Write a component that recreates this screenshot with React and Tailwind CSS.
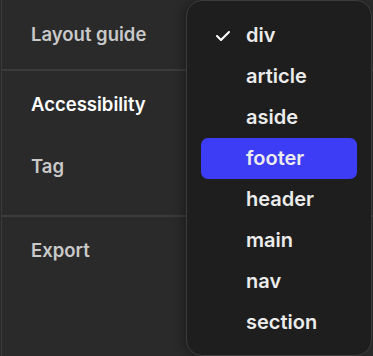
import React from "react";
import { FaCheck } from "react-icons/fa6";

const tags = ["div", "article", "aside", "footer", "header", "main", "nav", "section"];

const SideItem = ({ label, active }) => (
  <div
    className={`h-[24px] flex items-center pl-[29px] text-[18.5px] font-semibold ${
      active ? "text-white" : "text-[#c9c9c9]"
    }`}
  >
    {label}
  </div>
);

const App = () => {
  const selected = "div";
  const highlighted = "footer";

  return (
    <div
      className="relative w-[373px] h-[356px] overflow-hidden bg-[#2a2a2a]"
      style={{ fontFamily: "Inter, 'Noto Sans', sans-serif" }}
    >
      <div className="h-full ml-[1px] border-l border-[#3a3a3a] flex flex-col">
        <div className="h-[69px] flex items-center">
          <SideItem label="Layout guide" />
        </div>
        <div className="h-[2px] bg-[#3b3b3b]" />
        <div className="h-[144px] flex flex-col pt-[22px] gap-[38px]">
          <SideItem label="Accessibility" active />
          <SideItem label="Tag" />
        </div>
        <div className="h-[2px] bg-[#3b3b3b]" />
        <div className="pt-[22px]">
          <SideItem label="Export" />
        </div>
      </div>

      {/* tag menu */}
      <div className="absolute left-[186px] top-0 w-[186px] h-[356px] rounded-[16px] border border-[#3c3c3c] bg-[#1e1e1e] shadow-[-4px_0_10px_rgba(0,0,0,0.25)] px-[14px] pt-[14px]">
        {tags.map((tag) => (
          <div
            key={tag}
            className={`h-[41px] flex items-center rounded-[7px] ${
              tag === highlighted ? "bg-[#3d3df5]" : ""
            }`}
          >
            <div className="w-[45px] pl-[14px] flex items-center">
              {tag === selected && <FaCheck className="w-[16px] h-[16px] text-white" />}
            </div>
            <span className="text-[20px] font-semibold text-[#ececec] pb-[1px]">{tag}</span>
          </div>
        ))}
      </div>
    </div>
  );
};

export default App;
